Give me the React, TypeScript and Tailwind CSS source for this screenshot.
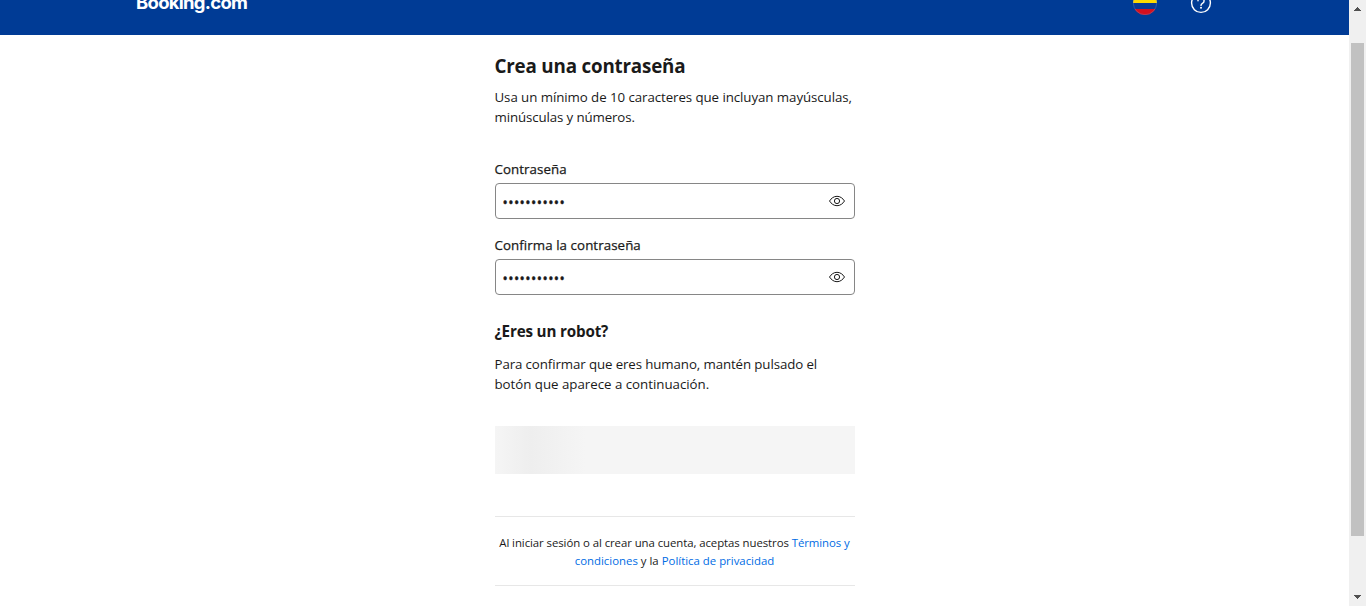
function Flag() {
  return (
    <svg width="24" height="24" viewBox="0 0 24 24" aria-hidden="true">
      <defs>
        <clipPath id="flag-circle">
          <circle cx="12" cy="12" r="12" />
        </clipPath>
      </defs>
      <g clipPath="url(#flag-circle)">
        <rect width="24" height="12" fill="#ffda00" />
        <rect y="12" width="24" height="6" fill="#0a3a96" />
        <rect y="18" width="24" height="6" fill="#d4101f" />
      </g>
      <circle cx="12" cy="12" r="11.7" fill="none" stroke="#8098c9" strokeOpacity="0.55" strokeWidth="0.6" />
    </svg>
  );
}

function Help() {
  return (
    <svg width="22" height="22" viewBox="0 0 22 22" fill="none" stroke="#ffffff" strokeWidth="1.4" strokeLinecap="round" aria-hidden="true">
      <circle cx="11" cy="11" r="9.4" />
      <path d="M8 8.8a3 3 0 1 1 4.4 2.6C11.4 12 11 12.4 11 13.4" />
      <circle cx="11" cy="15.8" r="1" fill="#ffffff" stroke="none" />
    </svg>
  );
}

function Eye() {
  return (
    <svg width="16" height="16" viewBox="0 0 16 16" fill="none" stroke="#1a1a1a" strokeWidth="1" aria-hidden="true">
      <path d="M0.5 8C2.2 5.3 4.8 3.3 8 3.3S13.8 5.3 15.5 8C13.8 10.7 11.2 12.7 8 12.7S2.2 10.7 0.5 8Z" />
      <circle cx="8" cy="8" r="2.6" />
    </svg>
  );
}

function PasswordField({ id, label }: { id: string; label: string }) {
  return (
    <div>
      <label
        htmlFor={id}
        className="block text-[13.3px] leading-5 font-medium tracking-[0.08px] whitespace-nowrap [-webkit-text-stroke:0.25px_#1a1a1a]"
      >
        {label}
      </label>
      <div className="mt-1 flex h-9 items-center rounded-[4px] border border-[#868686] pr-[9px] pl-[7px]">
        <input
          id={id}
          type="password"
          readOnly
          value="abcdefghijk"
          className="min-w-0 flex-1 pt-[3px] text-[14px] leading-5 tracking-[0.44px] outline-none [-webkit-text-stroke:0.4px_#1a1a1a]"
        />
        <Eye />
      </div>
    </div>
  );
}

function Scrollbar() {
  return (
    <div className="flex w-[17px] shrink-0 flex-col items-center bg-[#f0f0f0]">
      <div className="flex h-[43px] pt-[7px]">
        <svg width="7" height="4" viewBox="0 0 7 4" fill="#505050" shapeRendering="crispEdges">
          <path d="M3 0h1v1h1v1h1v1h1v1H0V3h1V2h1V1h1Z" />
        </svg>
      </div>
      <div className="h-[493px] w-[13px] bg-[#c1c1c1]" />
      <div className="mt-auto pb-[7px]">
        <svg className="block" width="7" height="4" viewBox="0 0 7 4" fill="#505050" shapeRendering="crispEdges">
          <path d="M0 0h7v1H6v1H5v1H4v1H3V3H2V2H1V1H0Z" />
        </svg>
      </div>
    </div>
  );
}

export default function App() {
  return (
    <div className="flex h-[606px] overflow-hidden bg-white font-['Open_Sans','Noto_Sans',sans-serif] text-[#1a1a1a]">
      <div className="min-w-0 flex-1">
        <header className="flex h-[35px] flex-col justify-end overflow-hidden bg-[#003b95]">
          <div className="flex h-16 shrink-0 items-center pr-[137px] pl-[136px] text-white">
            <span className="pb-[3px] font-['Inter',sans-serif] text-[18.5px] leading-6 font-bold tracking-[-0.72px]">
              Booking.com
            </span>
            <div className="ml-auto flex items-center gap-[33px]">
              <Flag />
              <Help />
            </div>
          </div>
        </header>
        <main className="mx-auto w-[360px] pt-[17px]">
          <h1 className="text-[18.8px] leading-7 font-bold tracking-[-0.19px] whitespace-nowrap">Crea una contraseña</h1>
          <p className="mt-[7px] text-[13.3px] leading-5 whitespace-nowrap">
            <span className="tracking-[-0.07px]">Usa un mínimo de 10 caracteres que incluyan mayúsculas,</span>
            <br />
            <span className="tracking-[-0.12px]">minúsculas y números.</span>
          </p>
          <form className="mt-8 flex flex-col gap-4">
            <PasswordField id="password" label="Contraseña" />
            <PasswordField id="confirm" label="Confirma la contraseña" />
          </form>
          <h2 className="mt-6 text-[15.2px] leading-6 font-bold tracking-[-0.17px]">¿Eres un robot?</h2>
          <p className="mt-[11px] text-[13.3px] leading-5 whitespace-nowrap">
            <span className="tracking-[-0.11px]">Para confirmar que eres humano, mantén pulsado el</span>
            <br />
            <span className="tracking-[-0.02px]">botón que aparece a continuación.</span>
          </p>
          <div className="mt-8 h-12 bg-[linear-gradient(90deg,#f5f5f5_0px,#eeeeee_36px,#f5f5f5_90px)]" />
          <footer className="mt-[42px] border-y border-[#e7e7e7] pt-[17px] pb-[15px] text-center text-[11.4px] leading-[18px] whitespace-nowrap">
            <span className="tracking-[-0.07px]">
              Al iniciar sesión o al crear una cuenta, aceptas nuestros <a className="text-[#006ce4]">Términos y</a>
            </span>
            <br />
            <span>
              <a className="text-[#006ce4]">condiciones</a> y la <a className="text-[#006ce4]">Política de privacidad</a>
            </span>
          </footer>
        </main>
      </div>
      <Scrollbar />
    </div>
  );
}
